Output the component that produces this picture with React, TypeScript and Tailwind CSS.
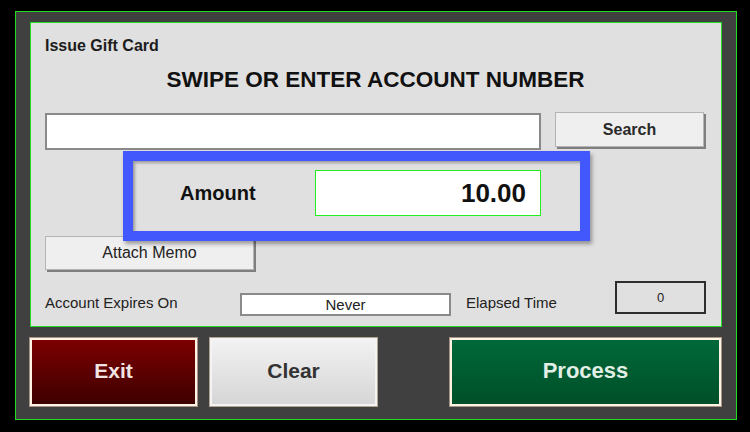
import React from 'react';

function BigButton({ label, tone }: { label: string; tone: 'exit' | 'clear' | 'process' }) {
    const styles = {
        exit: 'w-[167px] border-[#fff3e6] outline-[#a89484] bg-gradient-to-b from-[#7c0000] to-[#3e0000] text-[#f1e3e3]',
        clear: 'w-[167px] border-[#f4f4f4] outline-[#b2a292] bg-gradient-to-b from-[#f2f2f2] to-[#d6d6d6] text-[#333333]',
        process: 'w-[271px] border-[#fff3e6] outline-[#a89484] bg-gradient-to-b from-[#00693a] to-[#004f28] text-[#e2efe6]',
    }[tone];
    return (
        <button
            className={`h-[68px] border-[2px] outline outline-1 flex items-center justify-center pb-[3px] font-bold ${
                tone === 'process' ? 'text-[22px]' : 'text-[21px]'
            } ${styles}`}
        >
            {label}
        </button>
    );
}

export default function App() {
    return (
        <div className="w-[750px] h-[432px] bg-black overflow-hidden font-['Liberation_Sans',Arial,sans-serif] pt-[11px] pl-[15px]">
            <div className="w-[722px] h-[409px] bg-[#404040] border border-[#22dd22] pl-[14px] pt-[10px]">
                {/* Main panel */}
                <div className="relative w-[692px] h-[305px] bg-[#e0e0e0] border border-[#22dd22] pl-[14px] pr-[15px] pt-[14px] flex flex-col">
                    <div className="text-[16px] leading-[17px] font-bold text-[#1c1c1c]">Issue Gift Card</div>
                    <div className="mt-[15px] text-[22.5px] leading-[22px] font-bold text-[#111] text-center">
                        SWIPE OR ENTER ACCOUNT NUMBER
                    </div>

                    {/* Account number + search */}
                    <div className="mt-[21px] h-[38px] flex items-start justify-between">
                        <input
                            type="text"
                            className="mt-[1px] w-[496px] h-[37px] bg-white border-2 border-[#8a8a8a] outline-none"
                        />
                        <button className="mr-[2px] w-[149px] h-[35px] bg-[#efefef] border border-[#b4b4b4] shadow-[2px_2px_0_#7e7e7e] text-[16px] font-bold text-[#2a2a2a]">
                            Search
                        </button>
                    </div>

                    <button className="mt-[86px] w-[209px] h-[34px] bg-[#efefef] border border-[#b4b4b4] shadow-[2px_2px_0_#7e7e7e] text-[16px] text-[#222]">
                        Attach Memo
                    </button>

                    {/* Expiry + elapsed */}
                    <div className="mt-[13px] h-[35px] flex items-start text-[15px] text-[#222]">
                        <span className="mt-[11px] leading-[17px] w-[195px]">Account Expires On</span>
                        <div className="mt-[10px] w-[211px] h-[23px] bg-white border-2 border-[#8a8a8a] flex items-center justify-center leading-none">
                            Never
                        </div>
                        <span className="mt-[11px] ml-[15px] leading-[17px] w-[149px]">Elapsed Time</span>
                        <div className="-mt-[2px] w-[91px] h-[33px] border-2 border-[#2e2e2e] bg-[#e0e0e0] flex items-center justify-center text-[13px]">
                            0
                        </div>
                    </div>

                    {/* Highlight over the amount */}
                    <div className="absolute left-[92px] top-[128px] w-[467px] h-[90px] border-[10px] border-[#4258fc] bg-[#e0e0e0] shadow-[2px_3px_4px_rgba(0,0,0,0.35),inset_2px_2px_3px_rgba(0,0,0,0.3)] flex items-start pt-[9px] pl-[47px]">
                        <span className="w-[135px] h-[46px] flex items-center text-[20px] font-bold text-[#111]">Amount</span>
                        <div className="w-[226px] h-[46px] bg-white border border-[#22ee22] flex items-center justify-end pr-[14px] text-[26px] font-bold text-[#111]">
                            10.00
                        </div>
                    </div>
                </div>

                {/* Action buttons */}
                <div className="mt-[11px] flex">
                    <BigButton label="Exit" tone="exit" />
                    <div className="ml-[13px]">
                        <BigButton label="Clear" tone="clear" />
                    </div>
                    <div className="ml-[73px]">
                        <BigButton label="Process" tone="process" />
                    </div>
                </div>
            </div>
        </div>
    );
}
